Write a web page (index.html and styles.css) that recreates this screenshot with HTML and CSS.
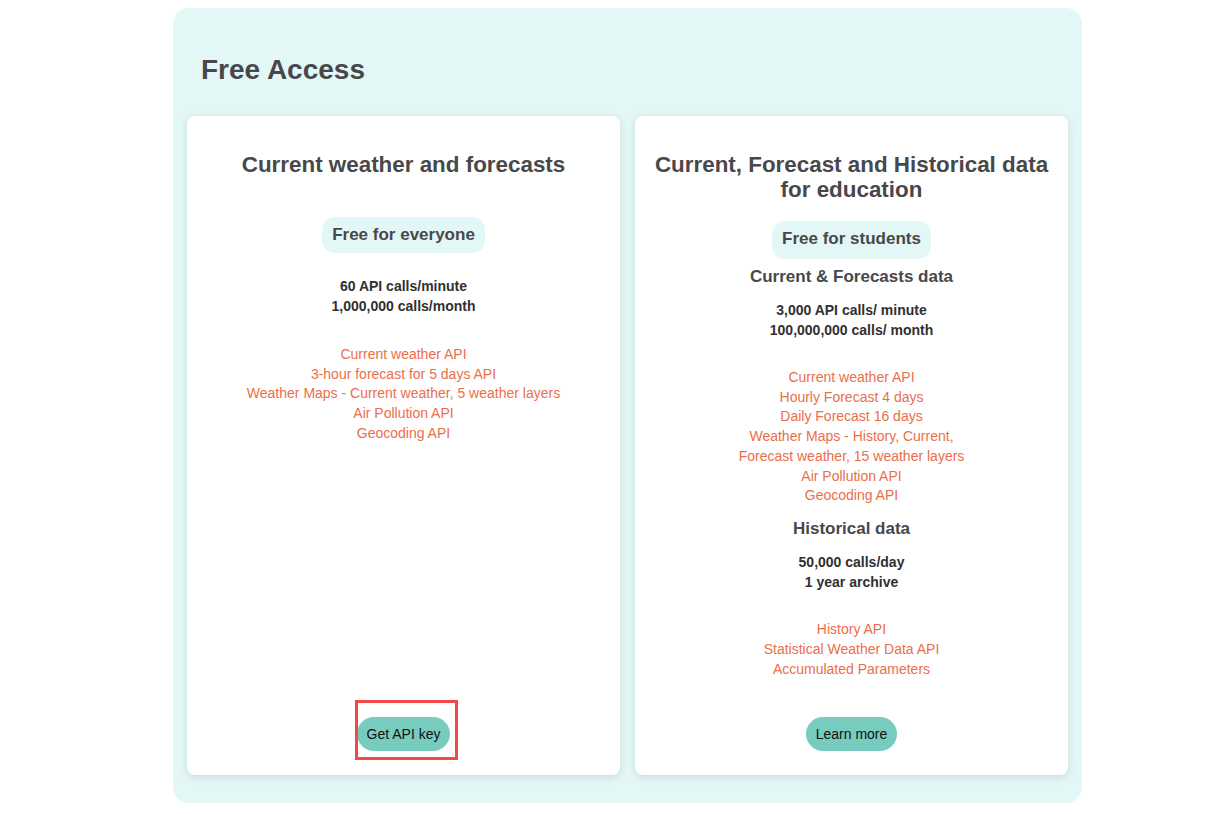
FILE: index.html
```html
<!DOCTYPE html>
<html lang="en">
<head>
<meta charset="utf-8">
<title>Free Access</title>
<link rel="stylesheet" href="styles.css">
</head>
<body>
<section class="panel">
  <h2 class="panel-title">Free Access</h2>
  <div class="cards">
    <div class="card">
      <h3 class="card-title card-title--single">Current weather and forecasts</h3>
      <div class="badge">Free for everyone</div>
      <p class="stats stats--first">60 API calls/minute<br>1,000,000 calls/month</p>
      <ul class="apis apis--first">
        <li>Current weather API</li>
        <li>3-hour forecast for 5 days API</li>
        <li>Weather Maps - Current weather, 5 weather layers</li>
        <li>Air Pollution API</li>
        <li>Geocoding API</li>
      </ul>
      <div class="actions">
        <a class="btn" href="#">Get API key</a>
        <span class="highlight"></span>
      </div>
    </div>
    <div class="card">
      <h3 class="card-title card-title--double">Current, Forecast and Historical data for education</h3>
      <div class="badge badge--tall">Free for students</div>
      <h4 class="subhead subhead--first">Current &amp; Forecasts data</h4>
      <p class="stats">3,000 API calls/ minute<br>100,000,000 calls/ month</p>
      <ul class="apis">
        <li>Current weather API</li>
        <li>Hourly Forecast 4 days</li>
        <li>Daily Forecast 16 days</li>
        <li>Weather Maps - History, Current,</li>
        <li>Forecast weather, 15 weather layers</li>
        <li>Air Pollution API</li>
        <li>Geocoding API</li>
      </ul>
      <h4 class="subhead">Historical data</h4>
      <p class="stats">50,000 calls/day<br>1 year archive</p>
      <ul class="apis">
        <li>History API</li>
        <li>Statistical Weather Data API</li>
        <li>Accumulated Parameters</li>
      </ul>
      <div class="actions">
        <a class="btn" href="#">Learn more</a>
      </div>
    </div>
  </div>
</section>
</body>
</html>
```

FILE: styles.css
```css
html, body {
  margin: 0;
  padding: 0;
  background: #ffffff;
}

body {
  padding: 8px 0 0 173px;
  font-family: "Liberation Sans", Arial, sans-serif;
  color: #48484a;
}

.panel {
  box-sizing: border-box;
  width: 909px;
  background: #e3f8f6;
  border-radius: 16px;
  padding: 46px 14px 28px;
}

.panel-title {
  margin: 0 0 30px 14px;
  font-size: 28px;
  line-height: 32px;
  font-weight: 700;
  color: #48484a;
}

.cards {
  display: grid;
  grid-template-columns: 1fr 1fr;
  gap: 15px;
}

.card {
  display: flex;
  flex-direction: column;
  align-items: center;
  text-align: center;
  background: #ffffff;
  border-radius: 8px;
  box-shadow: 0 2px 8px rgba(0, 0, 0, 0.12);
  padding: 36px 14px 24px;
}

.card-title {
  margin: 0;
  font-size: 22.4px;
  line-height: 25px;
  font-weight: 700;
  color: #48484a;
}

.card-title--single {
  margin-bottom: 40px;
}

.card-title--double {
  margin-bottom: 19px;
}

.badge {
  background: #e3f8f6;
  border-radius: 13px;
  padding: 8px 10px;
  font-size: 17px;
  line-height: 20px;
  font-weight: 700;
  color: #48484a;
}

.badge--tall {
  padding-bottom: 10px;
}

.subhead {
  margin: 13px 0 0;
  font-size: 17px;
  line-height: 20px;
  font-weight: 700;
  color: #48484a;
}

.subhead--first {
  margin-top: 8px;
}

.stats {
  margin: 14px 0 0;
  font-size: 14px;
  line-height: 19.5px;
  font-weight: 700;
  color: #303030;
}

.stats--first {
  margin-top: 23px;
  line-height: 20px;
}

.apis {
  list-style: none;
  margin: 28px 0 0;
  padding: 0;
  font-size: 14px;
  line-height: 19.74px;
  color: #eb6e4b;
}

.apis--first {
  margin-top: 29px;
}

.actions {
  position: relative;
  margin-top: auto;
  padding-top: 38px;
}

.btn {
  display: inline-block;
  height: 34px;
  line-height: 34px;
  padding: 0 10px;
  border-radius: 17px;
  background: #78cbbf;
  color: #111111;
  font-size: 14px;
  text-decoration: none;
}

.highlight {
  position: absolute;
  left: -2px;
  top: 21px;
  width: 103px;
  height: 60px;
  box-sizing: border-box;
  border: 3px solid #f44848;
}
```
